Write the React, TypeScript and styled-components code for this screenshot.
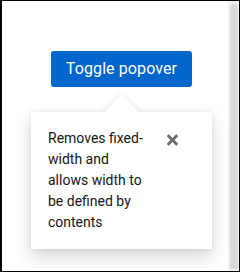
import React from "react";
import styled, { createGlobalStyle } from "styled-components";

const GlobalStyle = createGlobalStyle`
  html, body {
    margin: 0;
    padding: 0;
    background: #ffffff;
  }
  * {
    box-sizing: border-box;
  }
`;

const Frame = styled.div`
  width: 240px;
  height: 272px;
  display: flex;
  flex-direction: row;
  border-style: solid;
  border-color: #000000;
  border-width: 1px 1px 1px 2px;
  background: #ffffff;
  font-family: Roboto, "Noto Sans", "Liberation Sans", sans-serif;
  overflow: hidden;
`;

const Main = styled.div`
  flex: 1;
  display: flex;
  flex-direction: column;
  align-items: flex-start;
  padding: 50px 0 0 29px;
  gap: 25px;
`;

const ToggleButton = styled.button`
  margin-left: 20px;
  width: 141px;
  height: 36px;
  border: none;
  border-radius: 3px;
  background: #0066cc;
  color: #ffffff;
  font-family: inherit;
  font-size: 16px;
  line-height: 24px;
  letter-spacing: 0.1px;
  padding: 6px 0;
  cursor: pointer;
`;

const Popover = styled.div`
  position: relative;
  width: 181px;
  background: #ffffff;
  box-shadow: 0 8px 16px 0 rgba(3, 3, 3, 0.16),
    0 0 6px 0 rgba(3, 3, 3, 0.08);
`;

const Arrow = styled.div`
  position: absolute;
  top: -12px;
  left: 78px;
  width: 25px;
  height: 25px;
  background: #ffffff;
  transform: rotate(45deg);
  box-shadow: 0 0 6px 0 rgba(3, 3, 3, 0.1);
`;

const PopoverBody = styled.div`
  position: relative;
  display: flex;
  flex-direction: row;
  justify-content: space-between;
  align-items: flex-start;
  padding: 16px 34px 16px 17px;
  background: #ffffff;
`;

const PopoverText = styled.p`
  margin: 0;
  width: 100px;
  font-size: 14px;
  line-height: 21px;
  color: #151515;
`;

const CloseButton = styled.button`
  display: flex;
  margin-top: 4px;
  padding: 0;
  border: none;
  background: none;
  color: #6a6e73;
  cursor: pointer;
`;

const Scrollbar = styled.div`
  width: 11px;
  display: flex;
  flex-direction: column;
  padding: 3px 1px 2px 2px;
  background: #f1f1f1;
`;

const Thumb = styled.div`
  flex: 1;
  background: #d9d9d9;
  border-radius: 4px 4px 0 0;
`;

function TimesIcon() {
  return (
    <svg width="11" height="16" viewBox="0 0 352 512" fill="currentColor">
      <path d="M242.72 256l100.07-100.07c12.28-12.28 12.28-32.19 0-44.48l-22.24-22.24c-12.28-12.28-32.19-12.28-44.48 0L176 189.28 75.93 89.21c-12.28-12.28-32.19-12.28-44.48 0L9.21 111.45c-12.28 12.28-12.28 32.19 0 44.48L109.28 256 9.21 356.07c-12.28 12.28-12.28 32.19 0 44.48l22.24 22.24c12.28 12.28 32.2 12.28 44.48 0L176 322.72l100.07 100.07c12.28 12.28 32.2 12.28 44.48 0l22.24-22.24c12.28-12.28 12.28-32.19 0-44.48L242.72 256z" />
    </svg>
  );
}

export default function App() {
  return (
    <>
      <GlobalStyle />
      <Frame>
        <Main>
          <ToggleButton>Toggle popover</ToggleButton>
          <Popover>
            <Arrow />
            <PopoverBody>
              <PopoverText>
                Removes fixed-width and allows width to be defined by contents
              </PopoverText>
              <CloseButton aria-label="Close">
                <TimesIcon />
              </CloseButton>
            </PopoverBody>
          </Popover>
        </Main>
        <Scrollbar>
          <Thumb />
        </Scrollbar>
      </Frame>
    </>
  );
}
